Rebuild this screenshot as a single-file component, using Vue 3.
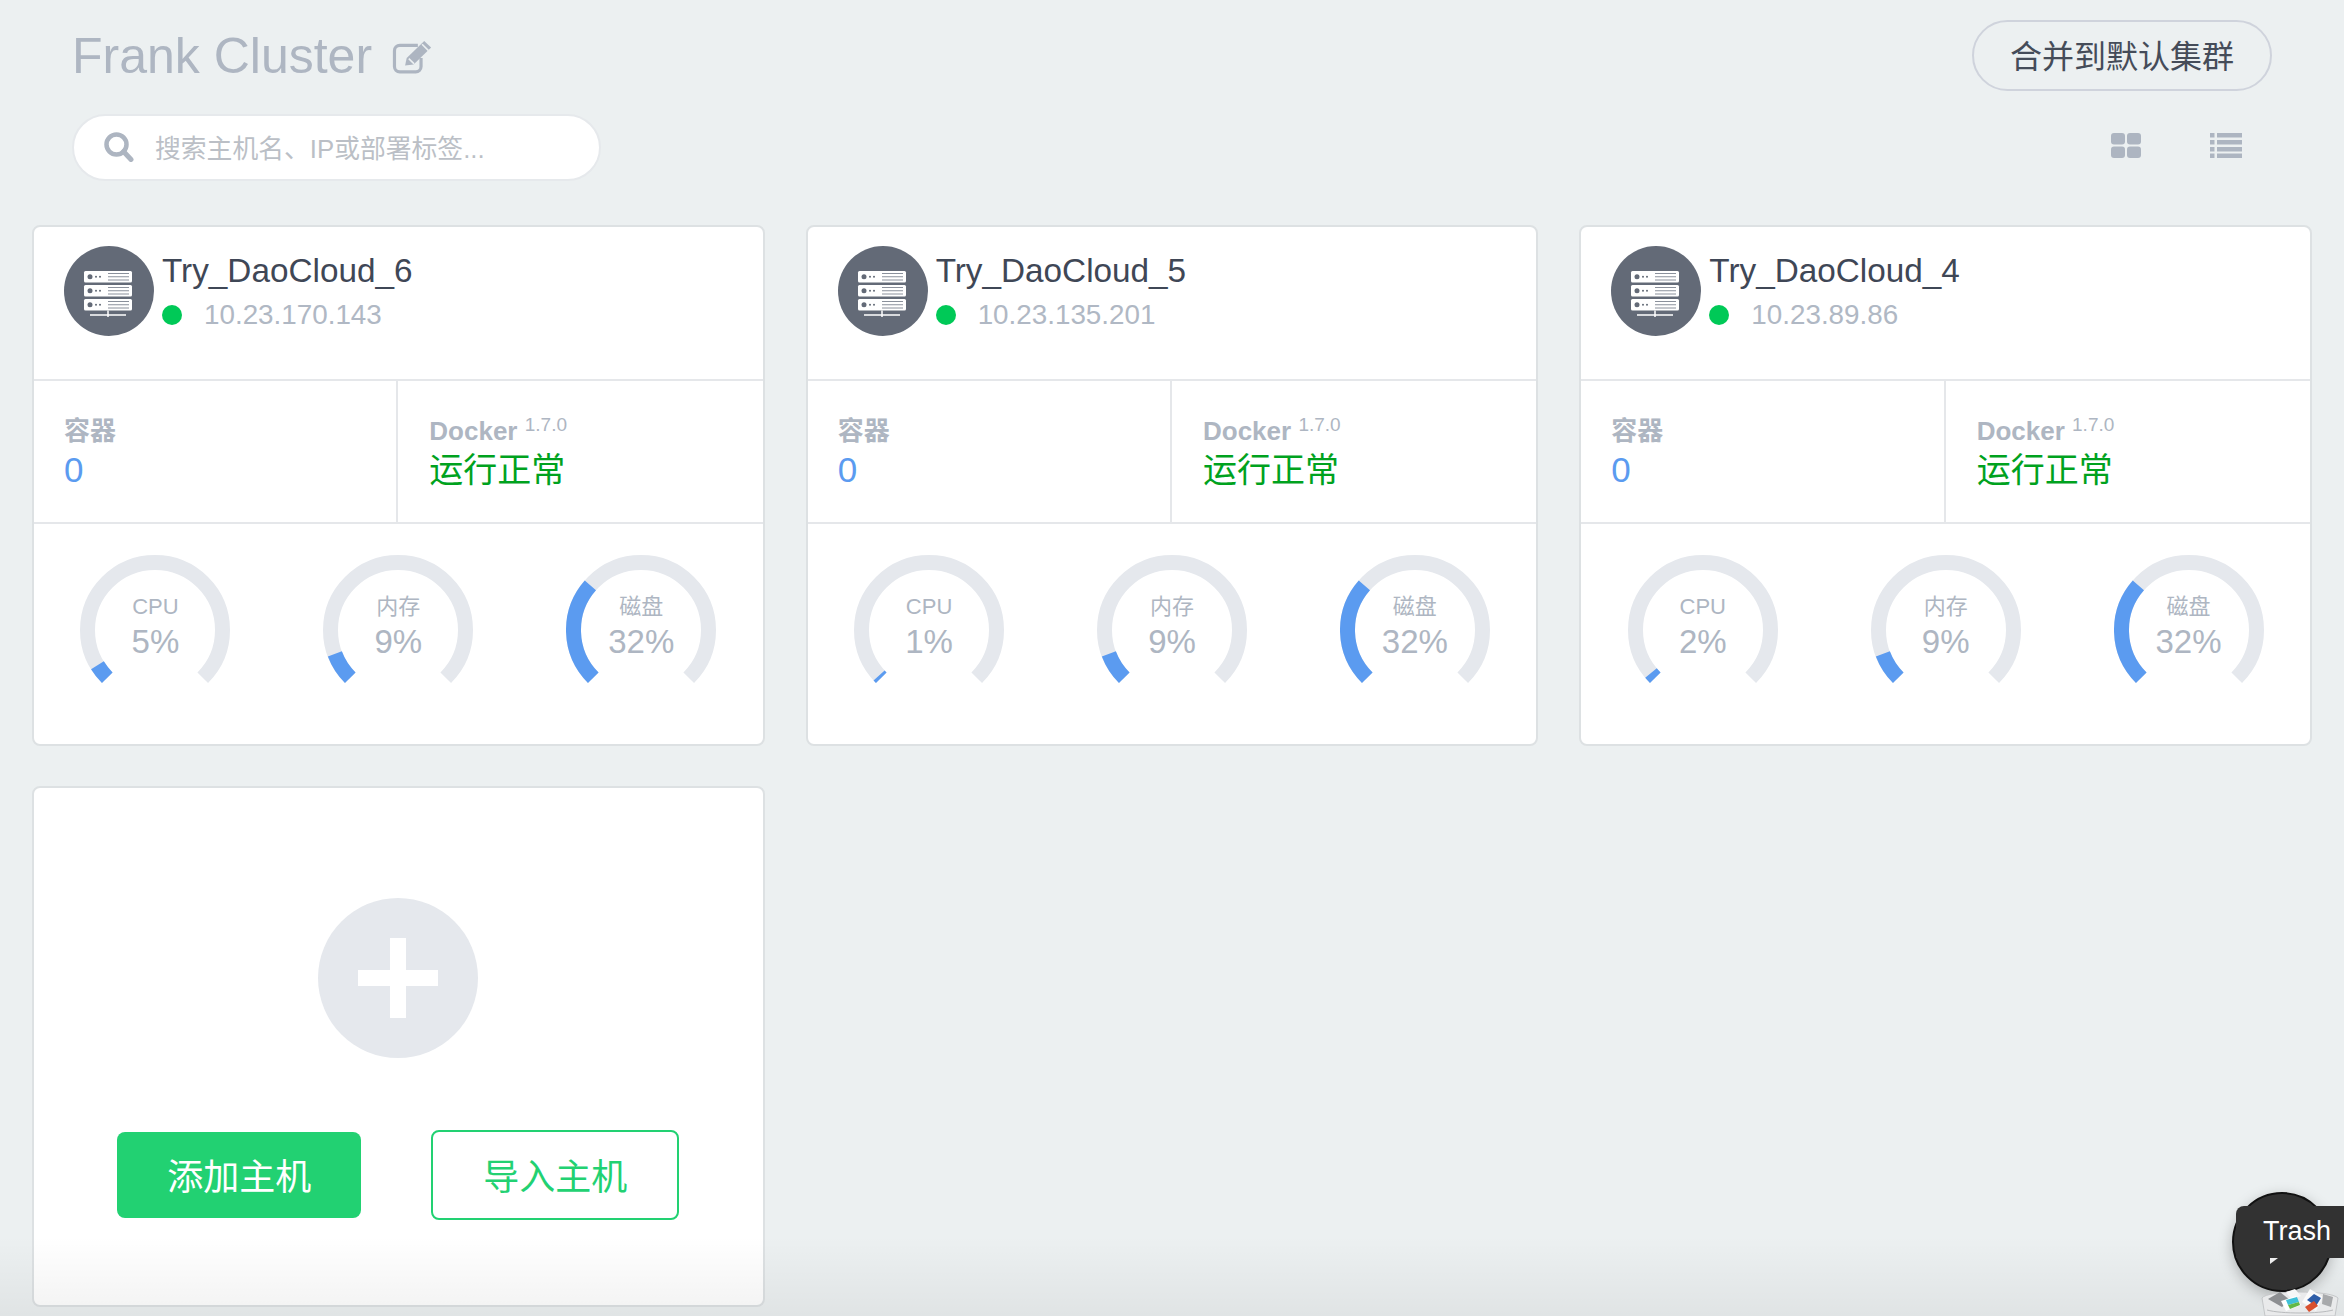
<script setup>
const hosts = [
  { name: 'Try_DaoCloud_6', ip: '10.23.170.143', cpu: 5, mem: 9, disk: 32 },
  { name: 'Try_DaoCloud_5', ip: '10.23.135.201', cpu: 1, mem: 9, disk: 32 },
  { name: 'Try_DaoCloud_4', ip: '10.23.89.86', cpu: 2, mem: 9, disk: 32 }
]

// gauge runs from 135deg clockwise through 270deg
function arc(pct) {
  const r = 67.5
  const start = (135 * Math.PI) / 180
  const end = ((135 + (270 * pct) / 100) * Math.PI) / 180
  const large = (270 * pct) / 100 > 180 ? 1 : 0
  const p = (a) => `${(75 + r * Math.cos(a)).toFixed(2)} ${(75 + r * Math.sin(a)).toFixed(2)}`
  return `M${p(start)} A${r} ${r} 0 ${large} 1 ${p(end)}`
}

function gauges(h) {
  return [
    { label: 'CPU', value: h.cpu },
    { label: '内存', value: h.mem },
    { label: '磁盘', value: h.disk }
  ]
}
</script>

<template>
  <div class="page">
    <div class="head">
      <div class="title-row">
        <div class="title">
          <span>Frank Cluster</span>
          <svg class="edit" width="40" height="34" viewBox="0 0 37 32" fill="none">
            <path d="M24 5H7a5 5 0 0 0-5 5v15a5 5 0 0 0 5 5h15a5 5 0 0 0 5-5v-8" stroke="#adb5c1" stroke-width="3"/>
            <path d="M12 24l1.500-7L30 1l6.500 6L20 23z" fill="#adb5c1"/>
            <path d="M15.500 17.500l5 5" stroke="#ecf0f1" stroke-width="1.500"/>
            <path d="M28 4l6 6" stroke="#ecf0f1" stroke-width="1.500"/>
          </svg>
        </div>
        <button class="merge">合并到默认集群</button>
      </div>
      <div class="tool-row">
        <div class="search">
          <svg width="30" height="30" viewBox="0 0 30 30" fill="none">
            <circle cx="12.500" cy="12.500" r="10" stroke="#adb5c1" stroke-width="4.500"/>
            <path d="M19.500 19.500L27 27.500" stroke="#adb5c1" stroke-width="5" stroke-linecap="round"/>
          </svg>
          <span>搜索主机名、IP或部署标签...</span>
        </div>
        <div class="views">
          <svg width="30" height="25" viewBox="0 0 30 25" fill="#adb5c1">
            <rect width="14" height="11.500" rx="3"/>
            <rect x="16" width="14" height="11.500" rx="3"/>
            <rect y="13.500" width="14" height="11.500" rx="3"/>
            <rect x="16" y="13.500" width="14" height="11.500" rx="3"/>
          </svg>
          <svg width="32" height="25" viewBox="0 0 32 25" fill="#adb5c1">
            <rect width="4.500" height="4.500"/><rect x="7" width="25" height="4.500"/>
            <rect y="7" width="4.500" height="4.500"/><rect x="7" y="7" width="25" height="4.500"/>
            <rect y="14" width="4.500" height="4.500"/><rect x="7" y="14" width="25" height="4.500"/>
            <rect y="20.500" width="4.500" height="4.500"/><rect x="7" y="20.500" width="25" height="4.500"/>
          </svg>
        </div>
      </div>
    </div>

    <div class="grid">
      <div v-for="h in hosts" :key="h.name" class="card">
        <div class="card-top">
          <svg class="avatar" width="90" height="90" viewBox="0 0 90 90">
            <circle cx="45" cy="45" r="45" fill="#636a77"/>
            <g v-for="y in [25, 39, 53]" :key="y">
              <rect x="20" :y="y" width="48" height="11.500" rx="1.500" fill="#fff"/>
              <circle cx="26" :cy="y + 5.750" r="2.500" fill="#636a77"/>
              <circle cx="32" :cy="y + 5.750" r="1" fill="#636a77"/>
              <circle cx="36" :cy="y + 5.750" r="1" fill="#636a77"/>
              <path :d="`M44 ${y + 2.500}H65M44 ${y + 5.750}H65M44 ${y + 9}H65`" stroke="#8a909b" stroke-width="1"/>
            </g>
            <path d="M26 69H62M44 64.500V71" stroke="#fff" stroke-width="1.500"/>
          </svg>
          <div class="host-text">
            <div class="host-name">{{ h.name }}</div>
            <div class="host-ip"><i class="dot"></i>{{ h.ip }}</div>
          </div>
        </div>
        <div class="stats">
          <div class="stat stat-left">
            <div class="stat-label">容器</div>
            <div class="stat-num">0</div>
          </div>
          <div class="stat">
            <div class="stat-label">Docker <sup>1.7.0</sup></div>
            <div class="stat-ok">运行正常</div>
          </div>
        </div>
        <div class="gauges">
          <div v-for="g in gauges(h)" :key="g.label" class="gauge">
            <svg width="150" height="150" viewBox="0 0 150 150" fill="none">
              <path :d="arc(100)" stroke="#e5e8ed" stroke-width="15"/>
              <path :d="arc(g.value)" stroke="#5b9bf0" stroke-width="15"/>
            </svg>
            <div class="gauge-label">{{ g.label }}</div>
            <div class="gauge-val">{{ g.value }}%</div>
          </div>
        </div>
      </div>

      <div class="card add-card">
        <div class="plus"><i class="plus-h"></i><i class="plus-v"></i></div>
        <div class="add-btns">
          <button class="btn-add">添加主机</button>
          <button class="btn-import">导入主机</button>
        </div>
      </div>
    </div>

    <div class="dock-shade"></div>

    <div class="trash">
      <div class="trash-circle"></div>
      <div class="trash-tip">Trash</div>
      <i class="trash-arrow"></i>
      <svg class="trash-can" width="78" height="28" viewBox="0 0 78 28">
        <path d="M1 10C6 2 70 2 77 10L74 28H4z" fill="#e9eaeb" stroke="#c4c6c8" stroke-width="1"/>
        <path d="M7 11l12-7 10 8-8 7z" fill="#8d8f92"/>
        <path d="M25 4l9-3 6 7-9 4z" fill="#f7f7f7"/>
        <path d="M20 13l15-5 5 9-15 6z" fill="#fff"/>
        <path d="M25 12l11-3 2 5-11 3z" fill="#3fc0d8"/>
        <path d="M27 17l11-3 1 3-10 4z" fill="#63b846"/>
        <path d="M41 14l8-13 13 8-7 14z" fill="#fafafa"/>
        <path d="M46 12l7-6 7 4-5 8z" fill="#2f5ea8"/>
        <path d="M44 19l9-6 4 5-9 6z" fill="#d9502e"/>
        <path d="M62 6l10 3-2 10-9-3z" fill="#a7a9ab"/>
        <path d="M6 22C20 26 58 26 72 22" stroke="#b9bbbd" stroke-width="1" fill="none"/>
      </svg>
    </div>
  </div>
</template>

<style scoped>
.page {
  position: relative;
  width: 2344px;
  height: 1316px;
  overflow: hidden;
  background: #ecf0f1;
  font-family: "Liberation Sans", "Noto Sans CJK SC", sans-serif;
}
.head {
  padding: 20px 72px 0 72px;
}
.title-row {
  display: flex;
  justify-content: space-between;
  align-items: center;
  height: 71px;
}
.title {
  display: flex;
  align-items: center;
  gap: 20px;
  font-size: 50px;
  color: #aeb6c2;
}
.edit {
  margin-top: 3px;
}
.merge {
  width: 300px;
  height: 71px;
  padding: 0 0 3px;
  border: 2px solid #cfd3dc;
  border-radius: 36px;
  background: transparent;
  font: inherit;
  font-size: 32px;
  color: #454c59;
}
.tool-row {
  display: flex;
  justify-content: space-between;
  align-items: center;
  margin-top: 23px;
}
.search {
  display: flex;
  align-items: center;
  gap: 21px;
  width: 529px;
  height: 67px;
  padding: 0 0 2px 30px;
  box-sizing: border-box;
  background: #fff;
  border: 2px solid #e6e9ec;
  border-radius: 34px;
  font-size: 25.800px;
  color: #bbbfc6;
}
.views {
  display: flex;
  gap: 69px;
  margin-right: 30px;
  margin-top: -5px;
}
.grid {
  display: grid;
  grid-template-columns: repeat(3, 1fr);
  grid-auto-rows: 521px;
  column-gap: 41px;
  row-gap: 40px;
  margin-top: 44px;
  padding: 0 32px;
}
.card {
  box-sizing: border-box;
  background: #fff;
  border: 2px solid #dde1e3;
  border-radius: 8px;
}
.card-top {
  display: flex;
  gap: 8px;
  height: 154px;
  box-sizing: border-box;
  padding: 19px 0 0 30px;
  border-bottom: 2px solid #e5e7ea;
}
.host-text {
  padding-top: 3px;
}
.host-name {
  font-size: 33.300px;
  line-height: 44px;
  color: #3f4756;
}
.host-ip {
  display: flex;
  align-items: center;
  margin-top: 2px;
  font-size: 27.800px;
  line-height: 40px;
  color: #b0b8c4;
}
.dot {
  width: 20px;
  height: 20px;
  margin-right: 22px;
  border-radius: 50%;
  background: #00c957;
}
.stats {
  display: grid;
  grid-template-columns: 1fr 1fr;
  height: 141px;
  border-bottom: 2px solid #e5e7ea;
}
.stat {
  padding: 31px 0 0 31px;
}
.stat-left {
  border-right: 2px solid #e5e7ea;
  padding-left: 30px;
}
.stat-label {
  height: 37px;
  font-size: 26px;
  line-height: 38px;
  font-weight: 700;
  color: #aeb6c2;
}
.stat-label sup {
  font-size: 19px;
  font-weight: 400;
  line-height: 0;
  vertical-align: 9px;
}
.stat-num {
  font-size: 35px;
  line-height: 42px;
  color: #5b9bf0;
}
.stat-ok {
  font-size: 34px;
  line-height: 42px;
  color: #00a21e;
}
.gauges {
  display: grid;
  grid-template-columns: repeat(3, 1fr);
  padding-top: 31px;
}
.gauge {
  position: relative;
  justify-self: center;
  width: 150px;
  height: 150px;
  text-align: center;
}
.gauge-label {
  position: absolute;
  top: 39px;
  left: 0;
  right: 0;
  font-size: 22px;
  line-height: 26px;
  color: #aeb6c2;
}
.gauge-val {
  position: absolute;
  top: 67px;
  left: 0;
  right: 0;
  font-size: 33px;
  line-height: 40px;
  color: #aeb6c2;
}
.add-card {
  display: flex;
  flex-direction: column;
  align-items: center;
}
.plus {
  position: relative;
  width: 160px;
  height: 160px;
  margin-top: 110px;
  border-radius: 50%;
  background: #e5e8ed;
}
.plus-h {
  position: absolute;
  left: 40px;
  top: 72px;
  width: 80px;
  height: 16px;
  background: #fff;
}
.plus-v {
  position: absolute;
  left: 72px;
  top: 40px;
  width: 16px;
  height: 80px;
  background: #fff;
}
.add-btns {
  display: flex;
  align-items: center;
  gap: 70px;
  margin-top: 72px;
}
.add-btns button {
  padding: 0 0 3px;
  font: inherit;
  font-size: 36px;
  border-radius: 8px;
}
.btn-add {
  width: 244px;
  height: 86px;
  border: 0;
  background: #22d172;
  color: #fff;
}
.btn-import {
  width: 248px;
  height: 90px;
  border: 2px solid #22d172;
  background: #fff;
  color: #22d172;
}
.dock-shade {
  position: absolute;
  left: 0;
  right: 0;
  bottom: 0;
  height: 80px;
  background: linear-gradient(rgba(0, 0, 0, 0), rgba(0, 0, 0, 0.05));
  pointer-events: none;
}
.trash {
  position: absolute;
  left: 2232px;
  top: 1192px;
  width: 112px;
  height: 124px;
}
.trash-circle {
  width: 100px;
  height: 100px;
  box-sizing: border-box;
  background: #323232;
  border: 2px solid #111;
  border-radius: 50%;
  box-shadow: 0 4px 14px rgba(0, 0, 0, 0.25);
}
.trash-tip {
  position: absolute;
  left: 4px;
  top: 14px;
  width: 108px;
  height: 52px;
  box-sizing: border-box;
  padding-left: 27px;
  background: #323232;
  border-radius: 8px 0 0 0;
  color: #fff;
  font-size: 27px;
  line-height: 50px;
  white-space: nowrap;
}
.trash-arrow {
  position: absolute;
  left: 38px;
  top: 66px;
  width: 0;
  height: 0;
  border-top: 6px solid #eee;
  border-right: 8px solid transparent;
}
.trash-can {
  position: absolute;
  left: 29px;
  top: 96px;
}
</style>
